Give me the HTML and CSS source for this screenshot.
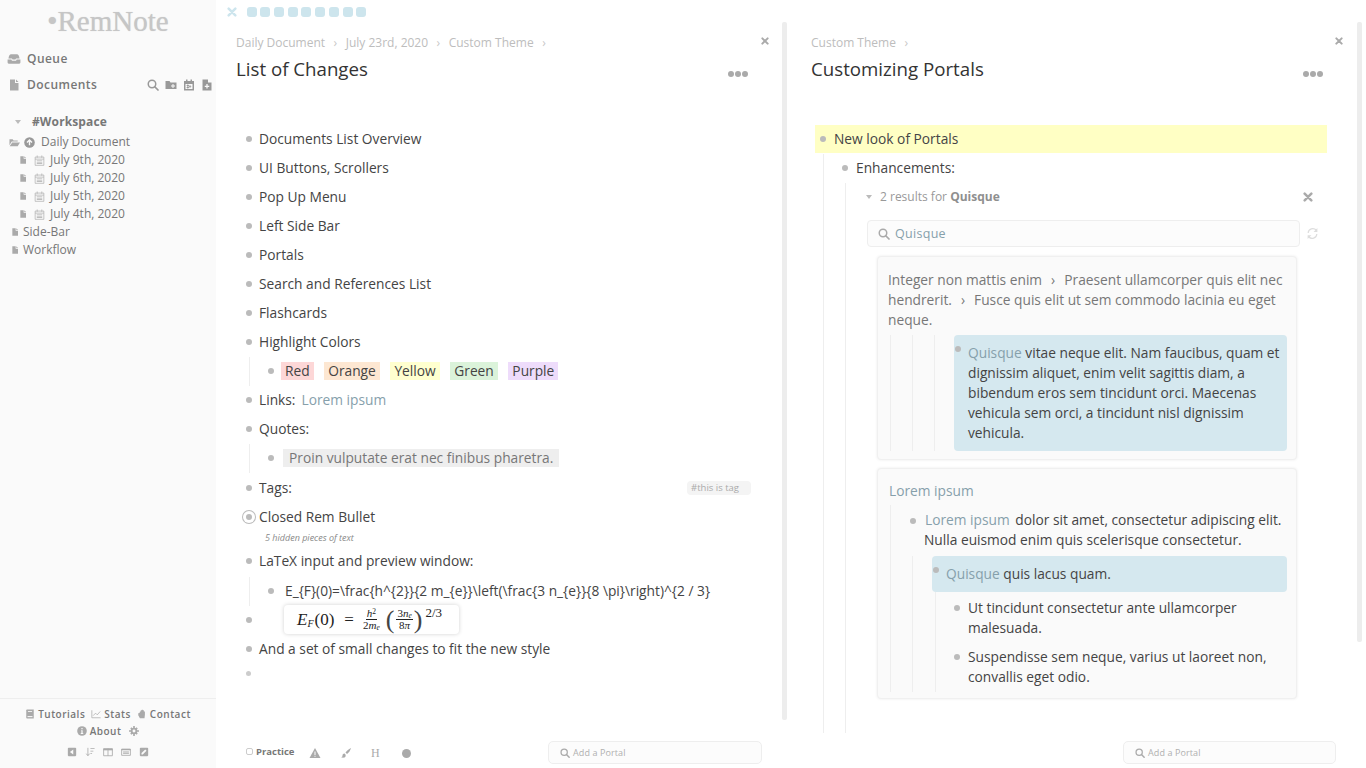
FILE: index.html
```html
<!DOCTYPE html>
<html lang="en">
<head>
  <meta charset="UTF-8" />
  <title>RemNote</title>
  <link rel="stylesheet" href="styles.css">
</head>
<body>

<svg class="sprite" xmlns="http://www.w3.org/2000/svg">
  <symbol id="i-file" viewBox="0 0 24 24"><path d="M4 1h10v7h7v15H4z"/><path d="M16 1l5 5h-5z"/></symbol>
  <symbol id="i-inbox" viewBox="0 0 24 24"><path d="M7 4h10c2.500 0 3.500 2.500 4.500 7H15.500l-1 2h-5l-1-2H2.500C3.500 6.500 4.500 4 7 4z"/><path d="M1 13h6.500l1 2h7l1-2H23v5a2 2 0 0 1-2 2H3a2 2 0 0 1-2-2z"/></symbol>
  <symbol id="i-search" viewBox="0 0 24 24"><circle cx="10" cy="10" r="7.500" fill="none" stroke="currentColor" stroke-width="3"/><path d="M15.500 15.500l6.500 6.500" stroke="currentColor" stroke-width="3.500" stroke-linecap="round"/></symbol>
  <symbol id="i-folder-plus" viewBox="0 0 24 24"><path d="M1 4h8l2 3h12v13H1z"/><path d="M16 10v8M12 14h8" stroke="#fafafa" stroke-width="2"/></symbol>
  <symbol id="i-cal-plus" viewBox="0 0 24 24"><path d="M2 4h4V1h3v3h6V1h3v3h4v19H2z"/><path d="M5 10h14v10H5z" fill="#fafafa"/><path d="M8 12h3v2H8zM8 16h3v2H8zM14 12v6M11.500 15h5" stroke="currentColor" stroke-width="1.500"/></symbol>
  <symbol id="i-file-plus" viewBox="0 0 24 24"><path d="M3 1h11v6h7v16H3z"/><path d="M12 10v9M7.500 14.500h9" stroke="#fafafa" stroke-width="2.500"/></symbol>
  <symbol id="i-folder-open" viewBox="0 0 24 24"><path d="M1 5h7l2 2.500h9V10H6l-5 8z"/><path d="M7 12h17l-5 8H1.500z"/></symbol>
  <symbol id="i-up" viewBox="0 0 24 24"><circle cx="12" cy="12" r="11.500"/><path d="M12 18V7M6.500 12L12 6.500l5.500 5.500" fill="none" stroke="#fafafa" stroke-width="3"/></symbol>
  <symbol id="i-cal" viewBox="0 0 24 24"><path d="M2.500 4.500h19v18h-19zM2.500 9h19M7 1v5M17 1v5" fill="none" stroke="currentColor" stroke-width="1.500"/><path d="M6 12h12v1.500H6zM6 15h12v1.500H6zM6 18h12v1.500H6z"/></symbol>
  <symbol id="i-book" viewBox="0 0 24 24"><path d="M3 3a2 2 0 0 1 2-2h16v22H5a2 2 0 0 1-2-2z"/><path d="M6 17h12v2.500H6z" fill="#fafafa"/><path d="M7 5h10v2H7z" fill="#fafafa"/></symbol>
  <symbol id="i-chart" viewBox="0 0 24 24"><path d="M2 3v18h21" fill="none" stroke="currentColor" stroke-width="1.800"/><path d="M5 16l6-6 4 4 7-8" fill="none" stroke="currentColor" stroke-width="1.800"/></symbol>
  <symbol id="i-hand" viewBox="0 0 24 24"><path d="M5 9h2V6h2V3h2.500V1.500H14V3h2.500v3H19v8l-1 8H7l-4-7V11z"/></symbol>
  <symbol id="i-info" viewBox="0 0 24 24"><circle cx="12" cy="12" r="11.500"/><path d="M10 10h3.500v7H15v2H9v-2h1.500v-5H10zM10.500 5h3v3h-3z" fill="#fafafa"/></symbol>
  <symbol id="i-cog" viewBox="0 0 24 24"><path d="M12 4a8 8 0 1 0 0 16 8 8 0 0 0 0-16zm0 4.500a3.500 3.500 0 1 1 0 7 3.500 3.500 0 0 1 0-7z" fill-rule="evenodd"/><path d="M10 0h4v5h-4zM10 19h4v5h-4zM0 10h5v4H0zM19 10h5v4h-5zM3 6l3-3 3.500 3.500-3 3zM14.500 17.500l3-3L21 18l-3 3zM3 18l3.500-3.500 3 3L6 21zM14.500 6.500L18 3l3 3-3.500 3.500z"/></symbol>
  <symbol id="i-square-left" viewBox="0 0 24 24"><path d="M4 2h16a2 2 0 0 1 2 2v16a2 2 0 0 1-2 2H4a2 2 0 0 1-2-2V4a2 2 0 0 1 2-2z"/><path d="M15 6v12l-8-6z" fill="#fafafa"/></symbol>
  <symbol id="i-sort" viewBox="0 0 24 24"><path d="M7 2v18M3 16l4 5 4-5" fill="none" stroke="currentColor" stroke-width="2"/><path d="M13 3h10v2H13zM13 9h7v2h-7zM13 15h4v2h-4z"/></symbol>
  <symbol id="i-columns" viewBox="0 0 24 24"><path d="M1.500 4h21v17h-21zM12 4v17" fill="none" stroke="currentColor" stroke-width="2"/><path d="M1 4h22v4H1z"/></symbol>
  <symbol id="i-keys" viewBox="0 0 24 24"><path d="M1.500 5h21v15h-21z" fill="none" stroke="currentColor" stroke-width="2"/><path d="M1 5h22v3H1zM5 11h14v2H5zM5 15h14v2H5z"/></symbol>
  <symbol id="i-pen" viewBox="0 0 24 24"><path d="M4 2h16a2 2 0 0 1 2 2v16a2 2 0 0 1-2 2H4a2 2 0 0 1-2-2V4a2 2 0 0 1 2-2z"/><path d="M6 18v-3.500L15 6l3 3-9 9z" fill="#fafafa"/></symbol>
  <symbol id="i-warn" viewBox="0 0 24 24"><path d="M12 2l11 20H1z"/><path d="M11 9h2v7h-2zM11 17.500h2v2h-2z" fill="#fff"/></symbol>
  <symbol id="i-brush" viewBox="0 0 24 24"><path d="M22 2c-3 1-8 5-11 9l3 3c4-3 7-8 8-12z"/><path d="M9 13c-3 0-4 2-4 4s-1 3-3 3c2 2 8 2 9-1 1-2 0-5-2-6z"/></symbol>
  <symbol id="i-refresh" viewBox="0 0 24 24"><path d="M4 11a8.500 8.500 0 0 1 15-5M20 13a8.500 8.500 0 0 1-15 5" fill="none" stroke="currentColor" stroke-width="2.200"/><path d="M21 2v7h-7zM3 22v-7h7z"/></symbol>
  <symbol id="i-x" viewBox="0 0 24 24"><path d="M4 4l16 16M20 4L4 20" stroke="currentColor" stroke-width="6" stroke-linecap="round"/></symbol>
</svg>

<div class="app">

  <aside class="sidebar">
    <div class="logo">•RemNote</div>

    <div class="nav-row">
      <svg class="ic ic-nav ic-inbox"><use href="#i-inbox"/></svg>
      <span>Queue</span>
    </div>
    <div class="nav-row">
      <svg class="ic ic-nav"><use href="#i-file"/></svg>
      <span>Documents</span>
      <span class="nav-tools">
        <svg class="ic ic-tool"><use href="#i-search"/></svg>
        <svg class="ic ic-tool"><use href="#i-folder-plus"/></svg>
        <svg class="ic ic-tool"><use href="#i-cal-plus"/></svg>
        <svg class="ic ic-tool"><use href="#i-file-plus"/></svg>
      </span>
    </div>

    <div class="workspace"><span class="caret"></span>#Workspace</div>

    <div class="tree-row tree-top">
      <svg class="ic ic-folder"><use href="#i-folder-open"/></svg>
      <svg class="ic ic-up"><use href="#i-up"/></svg>
      <span>Daily Document</span>
    </div>
    <div class="tree-row tree-date">
      <svg class="ic ic-file"><use href="#i-file"/></svg>
      <svg class="ic ic-cal"><use href="#i-cal"/></svg>
      <span>July 9th, 2020</span>
    </div>
    <div class="tree-row tree-date">
      <svg class="ic ic-file"><use href="#i-file"/></svg>
      <svg class="ic ic-cal"><use href="#i-cal"/></svg>
      <span>July 6th, 2020</span>
    </div>
    <div class="tree-row tree-date">
      <svg class="ic ic-file"><use href="#i-file"/></svg>
      <svg class="ic ic-cal"><use href="#i-cal"/></svg>
      <span>July 5th, 2020</span>
    </div>
    <div class="tree-row tree-date">
      <svg class="ic ic-file"><use href="#i-file"/></svg>
      <svg class="ic ic-cal"><use href="#i-cal"/></svg>
      <span>July 4th, 2020</span>
    </div>
    <div class="tree-row tree-doc">
      <svg class="ic ic-file"><use href="#i-file"/></svg>
      <span>Side-Bar</span>
    </div>
    <div class="tree-row tree-doc">
      <svg class="ic ic-file"><use href="#i-file"/></svg>
      <span>Workflow</span>
    </div>

    <div class="side-foot">
      <div class="foot-row">
        <svg class="ic ic-foot"><use href="#i-book"/></svg><span>Tutorials</span>
        <svg class="ic ic-foot"><use href="#i-chart"/></svg><span>Stats</span>
        <svg class="ic ic-foot"><use href="#i-hand"/></svg><span>Contact</span>
      </div>
      <div class="foot-row">
        <svg class="ic ic-foot"><use href="#i-info"/></svg><span>About</span>
        <svg class="ic ic-foot ic-cog"><use href="#i-cog"/></svg>
      </div>
      <div class="foot-icons">
        <svg class="ic ic-foot"><use href="#i-square-left"/></svg>
        <svg class="ic ic-foot"><use href="#i-sort"/></svg>
        <svg class="ic ic-foot"><use href="#i-columns"/></svg>
        <svg class="ic ic-foot"><use href="#i-keys"/></svg>
        <svg class="ic ic-foot"><use href="#i-pen"/></svg>
      </div>
    </div>
  </aside>

  <main class="main">
    <div class="topbar">
      <svg class="ic ic-tabx"><use href="#i-x"/></svg>
      <span class="tab"></span><span class="tab"></span><span class="tab"></span>
      <span class="tab"></span><span class="tab"></span><span class="tab"></span>
      <span class="tab"></span><span class="tab"></span><span class="tab"></span>
    </div>

    <div class="panes">

      <section class="pane pane-left">
        <div class="pane-main">
          <div class="pane-head">
            <div class="crumbs">
              <span>Daily Document</span><span class="sep">›</span>
              <span>July 23rd, 2020</span><span class="sep">›</span>
              <span>Custom Theme</span><span class="sep">›</span>
              <svg class="ic ic-close"><use href="#i-x"/></svg>
            </div>
            <div class="title-row">
              <h1>List of Changes</h1>
              <span class="dots"><i></i><i></i><i></i></span>
            </div>
          </div>

          <div class="pane-body">
            <div class="rem"><span class="bullet"></span><span>Documents List Overview</span></div>
            <div class="rem"><span class="bullet"></span><span>UI Buttons, Scrollers</span></div>
            <div class="rem"><span class="bullet"></span><span>Pop Up Menu</span></div>
            <div class="rem"><span class="bullet"></span><span>Left Side Bar</span></div>
            <div class="rem"><span class="bullet"></span><span>Portals</span></div>
            <div class="rem"><span class="bullet"></span><span>Search and References List</span></div>
            <div class="rem"><span class="bullet"></span><span>Flashcards</span></div>
            <div class="rem"><span class="bullet"></span><span>Highlight Colors</span></div>
            <div class="children">
              <div class="rem">
                <span class="bullet"></span>
                <span class="hl hl-red">Red</span>
                <span class="hl hl-orange">Orange</span>
                <span class="hl hl-yellow">Yellow</span>
                <span class="hl hl-green">Green</span>
                <span class="hl hl-purple">Purple</span>
              </div>
            </div>
            <div class="rem"><span class="bullet"></span><span>Links:</span><a class="link link-inline">Lorem ipsum</a></div>
            <div class="rem"><span class="bullet"></span><span>Quotes:</span></div>
            <div class="children">
              <div class="rem"><span class="bullet"></span><span class="quote">Proin vulputate erat nec finibus pharetra.</span></div>
            </div>
            <div class="rem rem-tags"><span class="bullet"></span><span>Tags:</span><span class="tag">#this is tag</span></div>
            <div class="rem"><span class="bullet bullet-closed"></span><span>Closed Rem Bullet</span></div>
            <div class="hidden-note">5 hidden pieces of text</div>
            <div class="rem"><span class="bullet"></span><span>LaTeX input and preview window:</span></div>
            <div class="children children-latex">
              <div class="rem"><span class="bullet"></span><span class="latex-src">E_{F}(0)=\frac{h^{2}}{2 m_{e}}\left(\frac{3 n_{e}}{8 \pi}\right)^{2 / 3}</span></div>
            </div>
            <div class="rem rem-math">
              <span class="bullet"></span>
              <div class="math">
                <i>E</i><sub><i>F</i></sub><span>(0)</span><span class="math-eq">=</span>
                <span class="frac"><span><i>h</i><sup>2</sup></span><span><span>2</span><i>m</i><sub><i>e</i></sub></span></span>
                <span class="paren">(</span>
                <span class="frac frac-second"><span><span>3</span><i>n</i><sub><i>e</i></sub></span><span><span>8</span><i>π</i></span></span>
                <span class="paren">)</span>
                <sup class="power">2/3</sup>
              </div>
            </div>
            <div class="rem"><span class="bullet"></span><span>And a set of small changes to fit the new style</span></div>
            <div class="rem rem-empty"><span class="bullet"></span></div>
          </div>

          <div class="toolbar">
            <span class="check"></span>
            <span class="practice">Practice</span>
            <svg class="ic ic-bar ic-warn"><use href="#i-warn"/></svg>
            <svg class="ic ic-bar ic-brush"><use href="#i-brush"/></svg>
            <span class="bar-h">H</span>
            <span class="bar-dot"></span>
            <div class="add-portal">
              <svg class="ic ic-add"><use href="#i-search"/></svg>
              <span>Add a Portal</span>
            </div>
          </div>
        </div>
        <div class="scroll scroll-left"></div>
      </section>

      <section class="pane pane-right">
        <div class="pane-main">
          <div class="pane-head">
            <div class="crumbs">
              <span>Custom Theme</span><span class="sep">›</span>
              <svg class="ic ic-close"><use href="#i-x"/></svg>
            </div>
            <div class="title-row">
              <h1>Customizing Portals</h1>
              <span class="dots"><i></i><i></i><i></i></span>
            </div>
          </div>

          <div class="pane-body">
            <div class="rem rem-yellow"><span class="bullet"></span><span>New look of Portals</span></div>
            <div class="children children-a">
              <div class="rem"><span class="bullet"></span><span>Enhancements:</span></div>
              <div class="children children-b">
                <div class="portal-head">
                  <span class="caret"></span>
                  <span>2 results for <b>Quisque</b></span>
                  <svg class="ic ic-portal-x"><use href="#i-x"/></svg>
                </div>
                <div class="search-row">
                  <div class="search-box">
                    <svg class="ic ic-search"><use href="#i-search"/></svg>
                    <span>Quisque</span>
                  </div>
                  <svg class="ic ic-refresh"><use href="#i-refresh"/></svg>
                </div>

                <div class="card">
                  <div class="card-path">Integer non mattis enim<span class="path-sep">›</span>Praesent ullamcorper quis elit nec hendrerit.<span class="path-sep">›</span>Fusce quis elit ut sem commodo lacinia eu eget neque.</div>
                  <div class="guide g-first">
                    <div class="guide g-wide">
                      <div class="guide g-last">
                        <div class="match">
                          <span class="bullet"></span>
                          <span><a class="link">Quisque</a> vitae neque elit. Nam faucibus, quam et dignissim aliquet, enim velit sagittis diam, a bibendum eros sem tincidunt orci. Maecenas vehicula sem orci, a tincidunt nisl dignissim vehicula.</span>
                        </div>
                      </div>
                    </div>
                  </div>
                </div>

                <div class="card card-second">
                  <div class="card-title"><a class="link">Lorem ipsum</a></div>
                  <div class="guide g-lorem">
                    <div class="card-rem">
                      <span class="bullet"></span>
                      <span><a class="link link-gap">Lorem ipsum</a> dolor sit amet, consectetur adipiscing elit. Nulla euismod enim quis scelerisque consectetur.</span>
                    </div>
                    <div class="guide g-inner">
                      <div class="match">
                        <span class="bullet"></span>
                        <span><a class="link">Quisque</a> quis lacus quam.</span>
                      </div>
                      <div class="guide g-sub">
                        <div class="rem"><span class="bullet"></span><span>Ut tincidunt consectetur ante ullamcorper malesuada.</span></div>
                        <div class="rem"><span class="bullet"></span><span>Suspendisse sem neque, varius ut laoreet non, convallis eget odio.</span></div>
                      </div>
                    </div>
                  </div>
                </div>
              </div>
            </div>
          </div>

          <div class="toolbar">
            <div class="add-portal">
              <svg class="ic ic-add"><use href="#i-search"/></svg>
              <span>Add a Portal</span>
            </div>
          </div>
        </div>
        <div class="scroll scroll-right"></div>
      </section>

    </div>
  </main>
</div>

</body>
</html>
```

FILE: styles.css
```css
* {
  box-sizing: border-box;
}

body {
  margin: 0;
  background: #fff;
  color: #444;
  font-family: "Open Sans", "Liberation Sans", sans-serif;
  font-size: 13.75px;
  line-height: 20px;
  overflow: hidden;
}

.sprite {
  display: none;
}

.ic {
  display: block;
  flex: none;
  fill: currentColor;
}

.app {
  display: flex;
  height: 768px;
}

/* sidebar */

.sidebar {
  width: 216px;
  flex: none;
  display: flex;
  flex-direction: column;
  background: #fafafa;
  color: #777;
}

.logo {
  height: 46px;
  padding-top: 3px;
  text-align: center;
  font-family: "Liberation Serif", serif;
  font-size: 29px;
  line-height: 36px;
  color: #c6c6c6;
  text-shadow: 0 0 1px #d0d0d0;
}

.nav-row {
  display: flex;
  align-items: center;
  height: 26px;
  padding-left: 8px;
  font-size: 12px;
  font-weight: 600;
  letter-spacing: 0.45px;
}

.ic-nav {
  width: 12px;
  height: 12px;
  margin-right: 7px;
  color: #aaa;
}

.ic-inbox {
  width: 14px;
  height: 14px;
  margin-left: -1px;
  margin-right: 6px;
}

.nav-tools {
  display: flex;
  gap: 6px;
  margin-left: auto;
  padding-right: 3px;
  color: #999;
}

.ic-tool {
  width: 12px;
  height: 12px;
}

.workspace {
  display: flex;
  align-items: center;
  height: 18px;
  margin-top: 15px;
  padding-left: 15px;
  font-size: 12px;
  font-weight: 700;
  letter-spacing: 0.12px;
}

.workspace .caret {
  margin-right: 11px;
}

.caret {
  width: 0;
  height: 0;
  flex: none;
  border-left: 3.5px solid transparent;
  border-right: 3.5px solid transparent;
  border-top: 4px solid #bbb;
}

.tree-row {
  display: flex;
  align-items: center;
  height: 18px;
  font-size: 12px;
}

.tree-top {
  margin-top: 2px;
  padding-left: 9px;
}

.tree-date {
  padding-left: 19px;
}

.tree-doc {
  padding-left: 11px;
}

.ic-folder {
  width: 11px;
  height: 11px;
  margin-right: 4px;
  color: #aaa;
}

.ic-up {
  width: 11px;
  height: 11px;
  margin-right: 6px;
  color: #999;
}

.ic-file {
  width: 8px;
  height: 10px;
  margin-right: 4px;
  color: #aaa;
}

.ic-cal {
  width: 11px;
  height: 11px;
  margin-right: 4px;
  margin-left: 3px;
  color: #aaa;
}

.tree-date span {
  margin-left: 1px;
}

.side-foot {
  margin-top: auto;
  height: 70px;
  padding-top: 6px;
  border-top: 1px solid #eee;
  font-size: 10px;
  font-weight: 600;
  letter-spacing: 0.5px;
  color: #777;
}

.foot-row {
  display: flex;
  justify-content: center;
  align-items: center;
  height: 17px;
}

.foot-row span {
  margin-right: 6px;
}

.foot-row span:last-of-type {
  margin-right: 0;
}

.foot-row .ic {
  margin-right: 3px;
}

.ic-foot {
  width: 10px;
  height: 10px;
  color: #aaa;
}

.foot-row .ic-cog {
  margin-left: 8px;
  margin-right: 0;
}

.foot-icons {
  display: flex;
  justify-content: center;
  gap: 8px;
  margin-top: 8px;
}

/* top strip */

.main {
  flex: 1;
  min-width: 0;
  display: flex;
  flex-direction: column;
}

.topbar {
  flex: none;
  height: 22px;
  display: flex;
  gap: 3.7px;
  padding: 7px 0 0 11px;
}

.ic-tabx {
  width: 10px;
  height: 10px;
  margin-right: 6px;
  color: #cde5ed;
}

.tab {
  width: 10px;
  height: 10px;
  border-radius: 3px;
  background: #cde5ed;
}

/* panes */

.panes {
  flex: 1;
  min-height: 0;
  display: flex;
}

.pane {
  display: flex;
  flex: none;
}

.pane-left {
  width: 571px;
}

.pane-right {
  width: 575px;
}

.pane-main {
  flex: 1;
  min-width: 0;
  display: flex;
  flex-direction: column;
}

.scroll {
  flex: none;
  width: 5px;
  border-radius: 2px;
  background: #ededed;
}

.scroll-left {
  height: 698px;
}

.scroll-right {
  height: 620px;
}

.pane-head {
  flex: none;
  height: 103px;
  padding: 13px 0 0 20px;
}

.pane-right .pane-head {
  padding-left: 24px;
}

.crumbs {
  display: flex;
  align-items: center;
  height: 16px;
  font-size: 12px;
  line-height: 16px;
  color: #bdbdbd;
}

.sep {
  margin: 0 8.5px;
  color: #c8c8c8;
}

.ic-close {
  width: 8px;
  height: 8px;
  margin: -4px 13px 0 auto;
  color: #aaa;
}

.pane-right .ic-close {
  margin-right: 14px;
}

.title-row {
  display: flex;
  align-items: center;
  height: 26px;
  margin-top: 5px;
  padding-right: 34px;
}

h1 {
  margin: 0;
  font-size: 18.7px;
  font-weight: 400;
  line-height: 26px;
  color: #333;
}

.dots {
  display: flex;
  gap: 1px;
  margin: 10px 0 0 auto;
}

.dots i {
  width: 6px;
  height: 6px;
  border-radius: 50%;
  background: #aaa;
}

.pane-body {
  flex: 1;
  min-height: 0;
  overflow: hidden;
  padding: 0 31px 0 30px;
}

.pane-right .pane-body {
  padding: 0 30px 0 28px;
}

/* rems */

.rem {
  display: flex;
  min-height: 29px;
  padding: 4px 0 5px;
}

.bullet {
  flex: none;
  width: 6px;
  height: 6px;
  margin: 7px 7px 0 0;
  border-radius: 50%;
  background: #bbb;
}

.pane-right .rem .bullet {
  margin-right: 8px;
}

.children {
  margin-left: 3px;
  padding-left: 18px;
  border-left: 1px solid #eee;
}

.children-latex {
  margin-top: 1px;
}

.hl {
  height: 18px;
  margin: 1px 10.6px 0 0;
  padding: 0 4px;
  line-height: 18px;
}

.hl-red {
  background: #fdd7d7;
}

.hl-orange {
  background: #fde7d2;
}

.hl-yellow {
  background: #ffffcf;
}

.hl-green {
  background: #dbf3da;
}

.hl-purple {
  background: #eedcfb;
}

.link {
  color: #86a0ab;
}

.link-inline {
  margin-left: 6px;
}

.link-gap {
  margin: 0 2px 0 1px;
}

.quote {
  height: 18px;
  margin: 1px 0 0 2px;
  padding: 0 6px;
  background: #eee;
  color: #777;
  line-height: 18px;
}

.rem-tags {
  margin-top: 1px;
}

.tag {
  height: 14px;
  margin: 3px 0 0 auto;
  padding: 0 12px 0 4px;
  border-radius: 4px;
  background: #f4f4f4;
  color: #aaa;
  font-size: 9.5px;
  line-height: 14px;
}

.bullet-closed {
  box-shadow: 0 0 0 3px #fff, 0 0 0 4px #bbb;
}

.hidden-note {
  height: 15px;
  padding-left: 19px;
  font-size: 9px;
  font-style: italic;
  line-height: 11px;
  color: #888;
}

.latex-src {
  margin-left: 4px;
}

.rem-math {
  height: 29px;
  margin: -1px 0 1px;
  padding: 0;
}

.rem-math .bullet {
  margin-top: 12px;
  margin-right: 32px;
}

.math {
  display: flex;
  align-items: center;
  width: 175px;
  height: 29px;
  padding-left: 13px;
  border-radius: 4px;
  background: #fff;
  box-shadow: 0 0 4px rgba(0, 0, 0, 0.18);
  color: #222;
  font-family: "Liberation Serif", serif;
  font-size: 17px;
  line-height: 14px;
  white-space: nowrap;
}

.math > sub {
  align-self: flex-end;
  margin-bottom: 5px;
  font-size: 10px;
  line-height: 10px;
}

.math > span {
  margin-left: 1px;
}

.math .math-eq {
  margin-left: 10px;
}

.math .frac {
  display: flex;
  flex-direction: column;
  align-items: center;
  margin: 0 4px 0 8px;
  font-size: 11px;
  line-height: 11px;
}

.math .frac-second {
  margin: 0 0 0 2px;
}

.frac > span {
  display: flex;
  padding: 0 1px;
}

.frac > span:first-child {
  border-bottom: 1px solid #222;
}

.frac sub,
.frac sup {
  align-self: flex-end;
  margin: 0;
  font-size: 7.5px;
  line-height: 7px;
}

.frac sup {
  align-self: flex-start;
}

.math .paren {
  font-size: 26px;
  font-weight: 400;
  line-height: 24px;
  color: #444;
}

.power {
  align-self: flex-start;
  margin: 2px 0 0 3px;
  font-size: 13px;
  line-height: 12px;
}

.rem-empty {
  min-height: 0;
  height: 19px;
  padding: 0;
}

.rem-empty .bullet {
  width: 5px;
  height: 5px;
  background: #ccc;
}

/* toolbar */

.toolbar {
  flex: none;
  display: flex;
  align-items: flex-start;
  height: 34px;
  padding: 7px 20px 0 30px;
}

.pane-right .toolbar {
  padding-right: 21px;
}

.check {
  width: 7px;
  height: 7px;
  margin: 7px 3px 0 0;
  border: 1px solid #ccc;
  border-radius: 2px;
}

.practice {
  width: 47px;
  font-size: 9.5px;
  font-weight: 700;
  line-height: 22px;
  color: #777;
}

.ic-bar {
  color: #aaa;
}

.ic-warn {
  width: 12px;
  height: 12px;
  margin: 6px 19px 0 6px;
}

.ic-brush {
  width: 12px;
  height: 12px;
  margin: 6px 19px 0 0;
}

.bar-h {
  width: 11px;
  margin-right: 20px;
  font-family: "Liberation Serif", serif;
  font-size: 12px;
  line-height: 25px;
  color: #aaa;
}

.bar-dot {
  width: 9px;
  height: 9px;
  margin-top: 8px;
  border-radius: 50%;
  background: #aaa;
}

.add-portal {
  display: flex;
  align-items: center;
  width: 214px;
  height: 23px;
  margin-left: auto;
  padding-left: 11px;
  border: 1px solid #eee;
  border-radius: 5px;
  background: #fcfcfc;
  color: #b0b0b0;
  font-size: 9px;
  letter-spacing: 0.1px;
}

.pane-right .add-portal {
  width: 213px;
}

.ic-add {
  width: 10px;
  height: 10px;
  margin-right: 3px;
  color: #aaa;
}

/* right pane */

.rem-yellow {
  min-height: 0;
  height: 28px;
  padding: 4px 0 4px 5px;
  background: #ffffc4;
}

.rem-yellow + .children {
  margin-top: 1px;
}

.children-a {
  margin-left: 8px;
}

.children-b {
  padding-left: 21px;
  padding-bottom: 34px;
}

.portal-head {
  display: flex;
  align-items: center;
  height: 28px;
  font-size: 12px;
  color: #999;
}

.portal-head .caret {
  margin: 0 8px 0 -1px;
}

.portal-head b {
  color: #8f8f8f;
}

.ic-portal-x {
  width: 10px;
  height: 10px;
  margin-left: auto;
  margin-right: 14px;
  color: #aaa;
}

.search-row {
  display: flex;
  align-items: center;
  margin-top: 9px;
}

.search-box {
  display: flex;
  align-items: center;
  width: 433px;
  height: 27px;
  padding-left: 10px;
  border: 1px solid #eee;
  border-radius: 4px;
  background: #fcfcfc;
  color: #86a0ab;
  font-size: 12.5px;
  letter-spacing: 0.3px;
}

.ic-search {
  width: 12px;
  height: 12px;
  margin-right: 5px;
  color: #aaa;
}

.ic-refresh {
  width: 13px;
  height: 13px;
  margin-left: 6px;
  color: #ddd;
}

.card {
  width: 420px;
  margin: 9px 0 0 10px;
  padding: 13px 9px 8px 10px;
  border: 1px solid #f0f0f0;
  border-radius: 4px;
  background: #fafafa;
  box-shadow: 0 0 3px rgba(0, 0, 0, 0.08);
}

.card-second {
  margin-top: 8px;
  padding-top: 12px;
  padding-bottom: 6px;
}

.card-path {
  color: #777;
}

.path-sep {
  margin: 0 9px;
}

.card-title {
  padding-left: 1px;
}

.guide {
  border-left: 1px solid #eee;
}

.g-first {
  margin: 5px 0 0 2px;
  padding-left: 21px;
}

.g-wide {
  padding-left: 21px;
}

.g-last {
  padding-left: 19px;
}

.match {
  display: flex;
  padding: 8px 5px 8px 1px;
  border-radius: 4px;
  background: #d5e8ef;
}

.match .bullet {
  margin-top: 3px;
}

.g-lorem {
  margin: 4px 0 0 2px;
  padding-left: 19px;
}

.card-rem {
  display: flex;
  padding-top: 5px;
}

.card-rem .bullet {
  margin: 8px 8px 0 0;
}

.g-inner {
  margin: 6px 0 0 2px;
  padding-left: 19px;
}

.g-sub {
  margin-left: 3px;
  padding: 2px 0 0 18px;
}
```
